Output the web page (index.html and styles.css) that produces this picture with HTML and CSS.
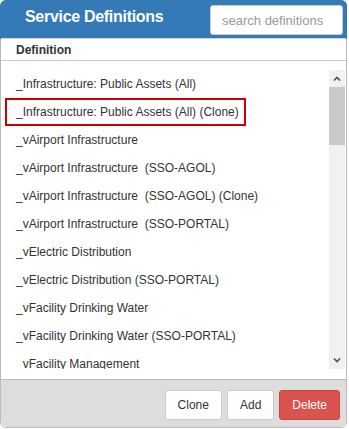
FILE: index.html
```html
<!DOCTYPE html>
<html lang="en">
<head>
    <meta charset="UTF-8">
    <meta name="viewport" content="width=device-width, initial-scale=1.0">
    <title>Service Definitions</title>
    <link rel="stylesheet" href="styles.css">
</head>
<body>
    <div class="panel">
        <div class="panel-header">
            <h1>Service Definitions</h1>
            <input type="text" class="search" placeholder="search definitions">
        </div>

        <div class="col-header">Definition</div>

        <div class="list-wrap">
            <div class="list-box">
                <ul class="def-list">
                    <li>_Infrastructure: Public Assets (All)</li>
                    <li class="selected">_Infrastructure: Public Assets (All) (Clone)</li>
                    <li>_vAirport Infrastructure</li>
                    <li>_vAirport Infrastructure  (SSO-AGOL)</li>
                    <li>_vAirport Infrastructure  (SSO-AGOL) (Clone)</li>
                    <li>_vAirport Infrastructure  (SSO-PORTAL)</li>
                    <li>_vElectric Distribution</li>
                    <li>_vElectric Distribution (SSO-PORTAL)</li>
                    <li>_vFacility Drinking Water</li>
                    <li>_vFacility Drinking Water (SSO-PORTAL)</li>
                    <li>_vFacility Management</li>
                </ul>
                <div class="scrollbar">
                    <div class="scroll-btn">
                        <svg width="8" height="5" viewBox="0 0 8 5"><path d="M1 4.5L4 1.5L7 4.5" fill="none" stroke="#505050" stroke-width="1.6"/></svg>
                    </div>
                    <div class="scroll-track">
                        <div class="scroll-thumb"></div>
                    </div>
                    <div class="scroll-btn">
                        <svg width="8" height="5" viewBox="0 0 8 5"><path d="M1 0.5L4 3.5L7 0.5" fill="none" stroke="#505050" stroke-width="1.6"/></svg>
                    </div>
                </div>
            </div>
        </div>

        <div class="panel-footer">
            <button class="btn">Clone</button>
            <button class="btn">Add</button>
            <button class="btn btn-danger">Delete</button>
        </div>
    </div>
</body>
</html>
```

FILE: styles.css
```css
body {
    margin: 0;
    font-family: "Liberation Sans", Arial, sans-serif;
    color: #333;
    background: #fff;
}

.panel {
    width: 345px;
    border: 1px solid #bbb;
    border-radius: 6px;
    background: #fff;
}

.panel-header {
    display: flex;
    align-items: center;
    justify-content: space-between;
    height: 39px;
    margin: -1px -1px 0 -1px;
    padding: 0 4px 0 25px;
    background-color: #337ab7;
    border-radius: 6px 6px 0 0;
}

.panel-header h1 {
    margin: 0 0 5px 0;
    font-size: 16px;
    font-weight: bold;
    letter-spacing: -0.3px;
    color: #fff;
}

.search {
    box-sizing: border-box;
    width: 133px;
    height: 30px;
    margin-top: 1px;
    padding: 0 11px;
    border: 1px solid #ccc;
    border-radius: 3px;
    font-family: inherit;
    font-size: 13px;
    color: #555;
}

.search::placeholder {
    color: #999;
}

.col-header {
    padding: 4px 15px 3px;
    line-height: 14px;
    font-size: 12px;
    font-weight: bold;
    border-top: 1px solid #d6d6d6;
    border-bottom: 1px solid #c8c8c8;
    margin-top: -1px;
}

.list-wrap {
    padding: 9px 1px 10px 0;
}

.list-box {
    display: flex;
    height: 299px;
}

.def-list {
    flex: 1;
    margin: 0;
    padding: 0;
    list-style: none;
    overflow: hidden;
}

.def-list li {
    width: fit-content;
    margin-left: 4px;
    padding: 4px 5px 4px 9px;
    border: 2px solid transparent;
    font-size: 12px;
    line-height: 16px;
    white-space: pre;
}

.def-list li.selected {
    border-color: #c00;
}

.scrollbar {
    display: flex;
    flex-direction: column;
    width: 16px;
    background: #f1f1f1;
}

.scroll-btn {
    display: flex;
    align-items: center;
    justify-content: center;
    height: 17px;
}

.scroll-track {
    flex: 1;
}

.scroll-thumb {
    height: 58px;
    background: #c9c9c9;
}

.panel-footer {
    display: flex;
    justify-content: flex-end;
    gap: 5px;
    padding: 10px 6px 7px;
    background: #ddd;
    border-top: 1px solid #bbb;
    border-radius: 0 0 6px 6px;
}

.btn {
    padding: 5px 12px;
    font-family: inherit;
    font-size: 12px;
    line-height: 18px;
    color: #333;
    background: #fff;
    border: 1px solid #ccc;
    border-radius: 3px;
}

.btn-danger {
    color: #fff;
    background: #d9534f;
    border-color: #d43f3a;
}
```
